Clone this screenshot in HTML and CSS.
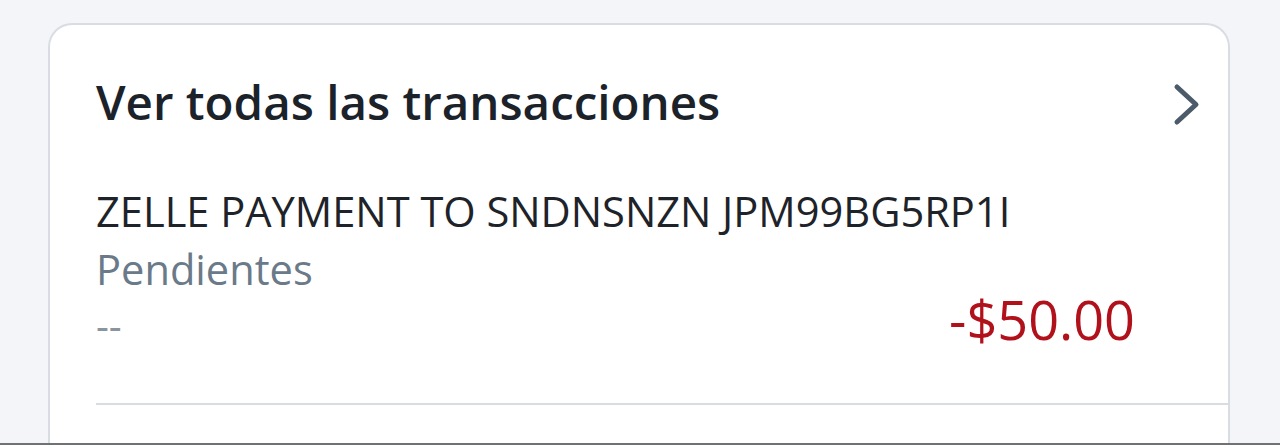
FILE: index.html
```html
<!DOCTYPE html>
<html lang="es">
<head>
<meta charset="utf-8">
<title>Transacciones</title>
<link rel="stylesheet" href="styles.css">
</head>
<body>
<div class="page">
  <section class="card">
    <div class="card-head">
      <h2 class="title">Ver todas las transacciones</h2>
      <svg class="chev" width="29" height="45" viewBox="0 0 29 45" aria-hidden="true">
        <path d="M5 5 L24 22.5 L5 40" fill="none" stroke="#4b5b69" stroke-width="5" stroke-linecap="round" stroke-linejoin="round"/>
      </svg>
    </div>
    <div class="txn">
      <div class="txn-name">ZELLE PAYMENT TO SNDNSNZN JPM99BG5RP1I</div>
      <div class="txn-status">Pendientes</div>
      <div class="txn-row">
        <span class="txn-date">--</span>
        <span class="txn-amount">-$50.00</span>
      </div>
    </div>
    <div class="divider"></div>
  </section>
</div>
<div class="bottom-bar"></div>
</body>
</html>
```
FILE: styles.css
```css
html, body {
  margin: 0;
  padding: 0;
}
body {
  width: 1280px;
  height: 445px;
  overflow: hidden;
  background: #f3f5f8;
  font-family: "Open Sans", "Noto Sans", sans-serif;
  display: flex;
  flex-direction: column;
}
.page {
  flex: 1;
  display: flex;
  flex-direction: column;
  padding: 23px 50px 0 48px;
  min-height: 0;
}
.card {
  flex: 1;
  background: #ffffff;
  border: 2px solid #d9dde3;
  border-bottom: none;
  border-radius: 24px 24px 0 0;
  padding-left: 46px;
  padding-top: 44px;
}
.card-head {
  display: flex;
  align-items: center;
  justify-content: space-between;
  padding-right: 27px;
}
.title {
  margin: 0;
  font-size: 47.5px;
  font-weight: 600;
  line-height: 65px;
  color: #1b222a;
  letter-spacing: 0;
}
.chev {
  display: block;
  margin-top: 6px;
}
.txn {
  margin-top: 48px;
  padding-right: 93px;
}
.txn-name {
  font-size: 41.6px;
  line-height: 58px;
  color: #1e2329;
}
.txn-status {
  font-size: 41.6px;
  line-height: 58px;
  color: #6a7a89;
}
.txn-row {
  display: flex;
  justify-content: space-between;
  align-items: baseline;
}
.txn-date {
  font-size: 40px;
  line-height: 42px;
  color: #8a949e;
}
.txn-amount {
  font-size: 54px;
  line-height: 42px;
  color: #b0111b;
}
.divider {
  margin-top: 57px;
  height: 2px;
  background: #d9dde2;
}
.bottom-bar {
  height: 2px;
  background: #6f7275;
}
```
